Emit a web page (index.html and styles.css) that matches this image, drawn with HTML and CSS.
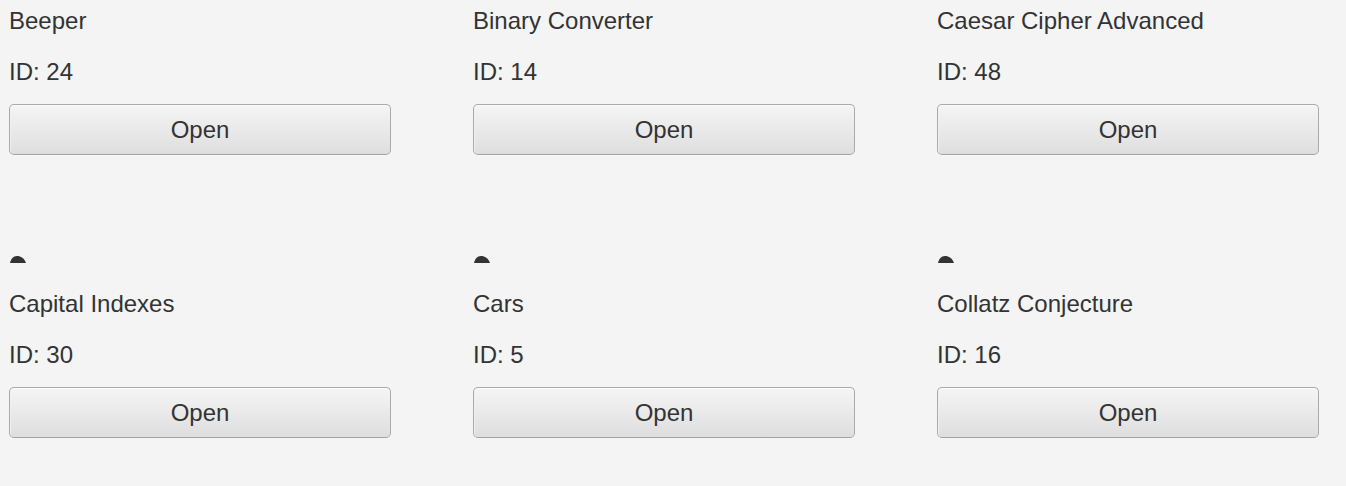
FILE: index.html
```html
<!DOCTYPE html>
<html lang="en">
<head>
    <meta charset="UTF-8">
    <meta name="viewport" content="width=device-width, initial-scale=1.0">
    <title>Programs</title>
    <link rel="stylesheet" href="styles.css">
</head>
<body>
    <div class="grid">
        <div class="card">
            <svg class="peek" width="16" height="8" viewBox="0 0 16 8"><path d="M0 8 C1 4 3 1 7 1 C11 1 14 3 16 8 Z"/></svg>
            <h2 class="title">Beeper</h2>
            <p class="id">ID: 24</p>
            <button class="open">Open</button>
        </div>
        <div class="card">
            <svg class="peek" width="16" height="8" viewBox="0 0 16 8"><path d="M0 8 C1 4 3 1 7 1 C11 1 14 3 16 8 Z"/></svg>
            <h2 class="title">Binary Converter</h2>
            <p class="id">ID: 14</p>
            <button class="open">Open</button>
        </div>
        <div class="card">
            <svg class="peek" width="16" height="8" viewBox="0 0 16 8"><path d="M0 8 C1 4 3 1 7 1 C11 1 14 3 16 8 Z"/></svg>
            <h2 class="title">Caesar Cipher Advanced</h2>
            <p class="id">ID: 48</p>
            <button class="open">Open</button>
        </div>
        <div class="card">
            <svg class="peek" width="16" height="8" viewBox="0 0 16 8"><path d="M0 8 C1 4 3 1 7 1 C11 1 14 3 16 8 Z"/></svg>
            <h2 class="title">Capital Indexes</h2>
            <p class="id">ID: 30</p>
            <button class="open">Open</button>
        </div>
        <div class="card">
            <svg class="peek" width="16" height="8" viewBox="0 0 16 8"><path d="M0 8 C1 4 3 1 7 1 C11 1 14 3 16 8 Z"/></svg>
            <h2 class="title">Cars</h2>
            <p class="id">ID: 5</p>
            <button class="open">Open</button>
        </div>
        <div class="card">
            <svg class="peek" width="16" height="8" viewBox="0 0 16 8"><path d="M0 8 C1 4 3 1 7 1 C11 1 14 3 16 8 Z"/></svg>
            <h2 class="title">Collatz Conjecture</h2>
            <p class="id">ID: 16</p>
            <button class="open">Open</button>
        </div>
    </div>
</body>
</html>
```

FILE: styles.css
```css
* {
    padding: 0;
    margin: 0;
    box-sizing: border-box;
    font-family: "Liberation Sans", Arial, sans-serif;
}

:root {
    --background: #f4f4f4;
    --text: #333333;
    --border: #aaaaaa;
}

body {
    background-color: var(--background);
    color: var(--text);
    overflow: hidden;
}

.grid {
    display: grid;
    grid-template-columns: repeat(3, 382px);
    column-gap: 82px;
    row-gap: 100px;
    padding-left: 9px;
    margin-top: -28px;
}

.card {
    display: flex;
    flex-direction: column;
}

.card .peek {
    display: block;
    fill: #333333;
    margin-left: 1px;
    margin-bottom: 26px;
}

.card .title,
.card .id {
    font-size: 24px;
    font-weight: normal;
    line-height: 30px;
}

.card .id {
    margin-top: 21px;
}

.card .open {
    margin-top: 17px;
    height: 51px;
    width: 100%;
    font-size: 24px;
    color: var(--text);
    border: 1px solid var(--border);
    border-bottom-color: #a2a2a2;
    border-radius: 5px;
    background: linear-gradient(#f5f5f5, #dedede);
    box-shadow: inset 0 1px 0 #fbfbfb, inset 1px 0 0 #f0f0f0, 0 1px 0 #fafafa;
}
```
